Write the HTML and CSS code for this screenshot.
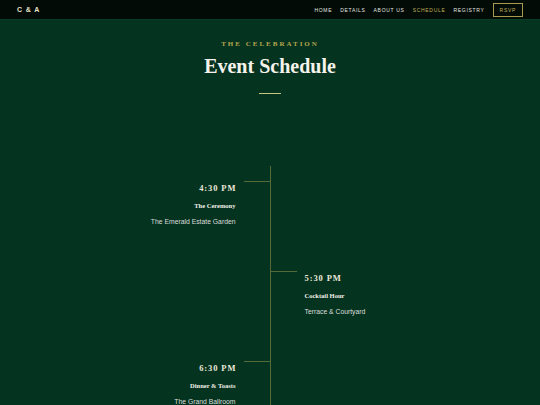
FILE: index.html
```html
<!DOCTYPE html>
<html lang="en">
<head>
<meta charset="utf-8">
<title>Event Schedule</title>
<link rel="stylesheet" href="styles.css">
</head>
<body>
<nav class="nav">
  <div class="brand">C &amp; A</div>
  <div class="links">
    <a class="link">HOME</a>
    <a class="link">DETAILS</a>
    <a class="link">ABOUT US</a>
    <a class="link active">SCHEDULE</a>
    <a class="link">REGISTRY</a>
    <a class="rsvp">RSVP</a>
  </div>
</nav>
<main class="main">
  <header class="head">
    <div class="eyebrow">THE CELEBRATION</div>
    <h1 class="title">Event Schedule</h1>
    <div class="rule"></div>
  </header>
  <section class="timeline">
    <div class="spine"></div>
    <div class="item left row1">
      <div class="content">
        <div class="time">4:30 PM</div>
        <div class="name">The Ceremony</div>
        <div class="venue">The Emerald Estate Garden</div>
      </div>
      <div class="connector"></div>
    </div>
    <div class="item right row2">
      <div class="connector"></div>
      <div class="content">
        <div class="time">5:30 PM</div>
        <div class="name">Cocktail Hour</div>
        <div class="venue">Terrace &amp; Courtyard</div>
      </div>
    </div>
    <div class="item left row3">
      <div class="content">
        <div class="time">6:30 PM</div>
        <div class="name">Dinner &amp; Toasts</div>
        <div class="venue">The Grand Ballroom</div>
      </div>
      <div class="connector"></div>
    </div>
  </section>
</main>
</body>
</html>
```
FILE: styles.css
```css
html, body {
  margin: 0;
  padding: 0;
}
body {
  background: #04331f;
  font-family: "Liberation Serif", serif;
  overflow: hidden;
  height: 405px;
}
.nav {
  height: 20px;
  box-sizing: border-box;
  background: #020b06;
  border-bottom: 1px solid #0a3d27;
  display: flex;
  align-items: center;
  justify-content: space-between;
  padding: 0 17px;
  font-family: "Liberation Sans", sans-serif;
}
.brand {
  color: #e9e3c9;
  font-size: 7px;
  font-weight: bold;
  letter-spacing: 0.9px;
}
.links {
  display: flex;
  align-items: center;
  gap: 8px;
}
.link {
  color: #e6e6e0;
  font-size: 5px;
  letter-spacing: 0.7px;
}
.link.active {
  color: #c2b05a;
}
.rsvp {
  color: #c2b05a;
  font-size: 5px;
  letter-spacing: 0.7px;
  border: 1px solid #a89a4c;
  padding: 3px 6px;
}
.head {
  text-align: center;
  padding-top: 20px;
}
.eyebrow {
  color: #b6a64e;
  font-size: 7px;
  font-weight: bold;
  letter-spacing: 2px;
  line-height: 9px;
}
.title {
  margin: 5px 0 0;
  color: #f4f2ea;
  font-size: 20px;
  font-weight: bold;
  line-height: 24px;
}
.rule {
  width: 22px;
  height: 1px;
  background: #c4c486;
  margin: 15px auto 0;
}
.timeline {
  margin-top: 72px;
  display: grid;
  grid-template-columns: 1fr 1px 1fr;
  grid-template-rows: 90px 90px 90px;
  padding-top: 15px;
}
.spine {
  grid-column: 2;
  grid-row: 1 / 4;
  background: #55693a;
  margin-top: -15px;
}
.item {
  display: flex;
  align-items: flex-start;
}
.left {
  grid-column: 1;
  justify-content: flex-end;
  text-align: right;
}
.right {
  grid-column: 3;
  text-align: left;
}
.row1 { grid-row: 1; }
.row2 { grid-row: 2; }
.row3 { grid-row: 3; }
.connector {
  width: 26px;
  height: 1px;
  background: #55693a;
  flex: none;
}
.left .connector { margin-left: 8px; }
.right .connector { margin-right: 8px; }
.content {
  padding-top: 1px;
}
.time {
  color: #ece8da;
  font-size: 8.5px;
  font-weight: bold;
  letter-spacing: 0.9px;
  line-height: 12px;
}
.left .time { margin-right: -0.9px; }
.name {
  color: #f2f0e8;
  font-size: 6.5px;
  font-weight: bold;
  line-height: 9px;
  margin-top: 7px;
}
.venue {
  color: #dcdedb;
  font-family: "Liberation Sans", sans-serif;
  font-size: 6.8px;
  line-height: 9px;
  margin-top: 7px;
}
```
